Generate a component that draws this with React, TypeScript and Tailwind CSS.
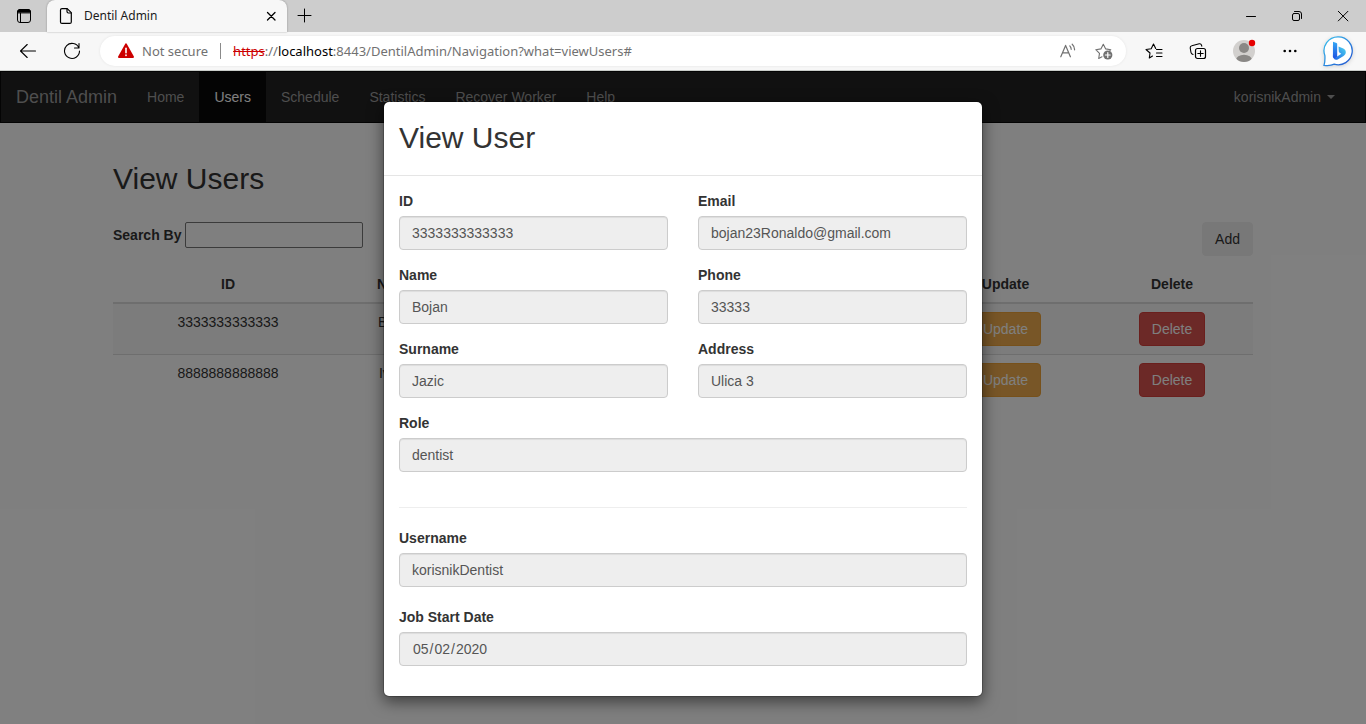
import React from "react";

type IconProps = { children: React.ReactNode; className?: string; box?: string };

function Icon({ children, className = "size-4", box = "0 0 16 16" }: IconProps) {
  return (
    <svg
      viewBox={box}
      className={className}
      fill="none"
      stroke="currentColor"
      strokeLinecap="round"
      strokeLinejoin="round"
      aria-hidden="true"
    >
      {children}
    </svg>
  );
}

function TabStrip() {
  return (
    <div className="flex h-8 bg-[#cdcdcd]">
      <button aria-label="Tab actions" className="flex w-[47px] items-center justify-center">
        <Icon>
          <rect x="1.5" y="1.5" width="13" height="13" rx="2.5" />
          <path d="M1.5 4.5V4A2.5 2.5 0 0 1 4 1.5h8A2.5 2.5 0 0 1 14.5 4v.5z" fill="currentColor" />
          <path d="M4.5 5v9.5" />
        </Icon>
      </button>
      <div className="flex w-60 items-center rounded-t-lg bg-[#f7f7f7] pr-2 pl-2.5 shadow-[0_0_2px_rgba(0,0,0,0.35)]">
        <Icon className="h-4 w-[18px]" box="0 0 18 16">
          <path
            d="M5 .6h5.2l4.1 4.1v9.2a1.500 1.500 0 0 1-1.500 1.500H5a1.500 1.500 0 0 1-1.500-1.500V2.100A1.500 1.500 0 0 1 5 .6z"
            strokeWidth="1.2"
          />
          <path d="M10 .8v2.700a1.500 1.500 0 0 0 1.500 1.500h2.600" strokeWidth="1.2" />
        </Icon>
        <span className="ml-[9px] flex-1 text-xs leading-4 text-[#1b1b1b]">Dentil Admin</span>
        <button aria-label="Close tab" className="flex size-4 items-center justify-center text-black">
          <Icon>
            <path d="M4.500 4.500l7.500 7.500M12 4.500L4.500 12" strokeWidth="1.3" />
          </Icon>
        </button>
      </div>
      <button aria-label="New tab" className="flex w-9 items-center justify-center">
        <Icon>
          <path d="M7.500 1v13M1 7.500h13" />
        </Icon>
      </button>
      <div className="ml-auto flex">
        <button aria-label="Minimize" className="flex w-[46px] items-center justify-center">
          <Icon>
            <path d="M3.500 8.500h9" />
          </Icon>
        </button>
        <button aria-label="Restore" className="flex w-[46px] items-center justify-center">
          <Icon>
            <rect x="3.500" y="5.500" width="7" height="7" rx="1.500" />
            <path d="M5.500 3.500H10A2.500 2.500 0 0 1 12.500 6v4.500" />
          </Icon>
        </button>
        <button aria-label="Close" className="flex w-[46px] items-center justify-center">
          <Icon>
            <path d="M3.300 3.300l9.600 9.600M12.900 3.300l-9.600 9.600" />
          </Icon>
        </button>
      </div>
    </div>
  );
}

function AddressBar() {
  return (
    <div className="mx-1.5 flex h-[30px] min-w-0 flex-1 items-center rounded-full bg-white pr-1 pl-4 text-[13px] leading-5 text-[#717171] shadow-[0_0_3px_rgba(0,0,0,0.08)]">
      <Icon className="size-5 shrink-0" box="0 0 20 20">
        <path d="M10 3.400L17 16H3z" fill="#cc0000" stroke="#cc0000" strokeWidth="2" />
        <path d="M10 7.200v4.600" stroke="#fff" strokeWidth="1.600" />
        <path d="M10 14.200v.100" stroke="#fff" strokeWidth="1.700" />
      </Icon>
      <span className="ml-1.5 whitespace-nowrap">Not secure</span>
      <span className="mx-3 h-4 w-px shrink-0 bg-[#8a8a8a]" />
      <div role="textbox" aria-label="Address" className="min-w-0 flex-1 truncate">
        <span className="text-[#cc0000] line-through">https</span>://
        <span className="text-black">localhost</span>
        :8443/DentilAdmin/Navigation?what=viewUsers#
      </div>
      <button aria-label="Read aloud" className="flex w-9 items-center justify-center">
        <Icon>
          <path d="M.8 13.800L5.600 2.400l4.800 11.400M2.600 9.800h6M9.800 2.800c1 1 1.400 2.100 1.400 3.500M12.200 1.200c1.700 1.500 2.500 3.300 2.400 5.600" strokeWidth="1.2" />
        </Icon>
      </button>
      <button aria-label="Add to favorites" className="flex w-9 items-center justify-center">
        <Icon className="size-[18px]" box="0 0 18 18">
          <path
            d="M7 14.800L3.700 16.500l.8-5.100L.8 7.700l5.100-.8L8.300 2.200l2.400 4.700 5.100.8-1 1"
            strokeWidth="1.1"
          />
          <circle cx="12.800" cy="13" r="4.600" fill="currentColor" stroke="none" />
          <path d="M12.800 10.600v4.800M10.400 13h4.800" stroke="#fff" strokeWidth="1.2" />
        </Icon>
      </button>
    </div>
  );
}

function Toolbar() {
  return (
    <div className="flex h-[39px] items-center border-b border-[#c9cdc9] bg-[#f7f7f7] pr-0.5 pl-1.5">
      <button aria-label="Back" className="flex w-11 items-center justify-center">
        <Icon className="size-[18px]" box="0 0 18 18">
          <path d="M8.200 2.500L1.500 9l6.700 6.500M1.500 9h15" strokeWidth="1.1" />
        </Icon>
      </button>
      <button aria-label="Refresh" className="flex w-11 items-center justify-center">
        <Icon className="size-[18px]" box="0 0 18 18">
          <path d="M15.900 6A7.500 7.500 0 1 0 16.500 9M16 1.500V6h-4.500" strokeWidth="1.1" />
        </Icon>
      </button>
      <AddressBar />
      <button aria-label="Favorites" className="flex w-11 items-center justify-center">
        <Icon className="size-[18px]" box="0 0 18 18">
          <path
            d="M7.500 14L4.300 16l.7-5L1 7.500l5.200-.8L8.500 2l2.200 4.500M11.500 7.500h5.500M11.500 11h5.500M11.500 14.500h5.500"
            strokeWidth="1.1"
          />
        </Icon>
      </button>
      <button aria-label="Collections" className="flex w-11 items-center justify-center">
        <Icon className="size-[18px]" box="0 0 18 18">
          <rect x="6.500" y="6.500" width="10" height="10" rx="2" strokeWidth="1.2" />
          <path
            d="M11.500 8.800v5.400M8.800 11.500h5.400M4 12.500L3 11.900a2 2 0 0 1-1-1.400L1.200 6a2 2 0 0 1 1.600-2.200l7.400-2a2 2 0 0 1 2.300 1.400l.3 1"
            strokeWidth="1.1"
          />
        </Icon>
      </button>
      <button aria-label="Profile" className="flex w-12 items-center justify-center">
        <svg viewBox="0 0 24 24" className="size-6" aria-hidden="true">
          <clipPath id="avatar-clip">
            <circle cx="12" cy="12" r="11" />
          </clipPath>
          <circle cx="12" cy="12" r="11" fill="#d2d0ce" />
          <g clipPath="url(#avatar-clip)" fill="#8a8886">
            <circle cx="12" cy="9" r="5" />
            <ellipse cx="12" cy="21" rx="8" ry="5.200" />
          </g>
          <circle cx="20" cy="4" r="3.200" fill="#e60000" />
        </svg>
      </button>
      <button aria-label="Settings and more" className="flex w-11 items-center justify-center">
        <svg viewBox="0 0 16 16" className="size-4" aria-hidden="true">
          <circle cx="2.700" cy="8" r="1.300" />
          <circle cx="8" cy="8" r="1.300" />
          <circle cx="13.300" cy="8" r="1.300" />
        </svg>
      </button>
      <button aria-label="Discover" className="flex w-[52px] items-center justify-center">
        <svg viewBox="0 0 32 32" className="size-8 drop-shadow-sm" aria-hidden="true">
          <defs>
            <linearGradient id="ring" x1="0" y1="0" x2="1" y2="1">
              <stop offset="0" stopColor="#35c2ee" />
              <stop offset="1" stopColor="#2350cf" />
            </linearGradient>
            <linearGradient id="stem" x1="0" y1="0" x2="0" y2="1">
              <stop offset="0" stopColor="#35a8f5" />
              <stop offset="1" stopColor="#1d4fe0" />
            </linearGradient>
            <linearGradient id="bowl" x1="1" y1="0" x2="0" y2="1">
              <stop offset="0" stopColor="#4fd6ee" />
              <stop offset="1" stopColor="#1c62e8" />
            </linearGradient>
          </defs>
          <path
            d="M16.500 1.800a14 14 0 1 1-4.300 27.400c-2.600 1.300-6 1.700-10.200 1.200.9-2.600 1.100-5.300.9-9.700A14 14 0 0 1 16.500 1.800z"
            fill="#fff"
            stroke="url(#ring)"
            strokeWidth="1.3"
          />
          <path d="M11 6.800l3.500 1.300c.5.2.7.5.7 1v12.400l-2.400 2.600c-1.200-.5-1.900-1.400-1.900-2.800z" fill="url(#stem)" />
          <path
            d="M16.500 11.500l4.800 2.100c1.700.8 2.500 2 2.500 3.700 0 1.500-.7 2.700-2.200 3.600l-5.900 3.500c-1.500.8-2.900.4-3.800-.7l7.400-5-1.600-.9c-.5-.3-.7-.7-.9-1.200z"
            fill="url(#bowl)"
          />
        </svg>
      </button>
    </div>
  );
}

const navItems = ["Home", "Users", "Schedule", "Statistics", "Recover Worker", "Help"];

function Navbar() {
  return (
    <nav className="flex h-[52px] items-stretch border border-[#080808] bg-[#222] pr-[15px] leading-5 text-[#9d9d9d]">
      <a href="#" className="flex items-center px-[15px] text-lg leading-5">
        Dentil Admin
      </a>
      {navItems.map((item) => (
        <a
          key={item}
          href="#"
          className={
            item === "Users" ? "flex items-center bg-[#080808] px-[15px] text-white" : "flex items-center px-[15px]"
          }
        >
          {item}
        </a>
      ))}
      <a href="#" className="ml-auto flex items-center px-[15px]">
        korisnikAdmin
        <span className="ml-1.5 border-x-4 border-t-4 border-x-transparent border-t-current" />
      </a>
    </nav>
  );
}

const users = [
  { id: "3333333333333", name: "Bojan", surname: "Jazic", role: "dentist" },
  { id: "8888888888888", name: "Ivana", surname: "Jazic", role: "admin" },
];

const button = "h-[34px] rounded border px-3 leading-5";

function UsersPage() {
  return (
    <section className="mx-auto w-full max-w-[1140px] pt-[39px]">
      <h2 className="text-3xl leading-[33px]">View Users</h2>
      <div className="mt-[27px] flex items-start justify-between">
        <div className="flex items-center gap-1">
          <label htmlFor="search" className="font-bold">
            Search By
          </label>
          <input id="search" className="h-[26px] w-[178px] rounded-xs border border-[#767676] bg-white px-1" />
        </div>
        <button className={`${button} border-[#f0f0f0] bg-[#f0f0f0]`}>Add</button>
      </div>
      <table className="mt-2.5 w-full table-fixed border-separate border-spacing-0 text-center">
        <colgroup>
          <col className="w-[230px]" />
          <col className="w-[106px]" />
          <col />
          <col />
          <col />
          <col className="w-[171px]" />
          <col className="w-[162px]" />
        </colgroup>
        <thead>
          <tr>
            {["ID", "Name", "Surname", "Role", "View", "Update", "Delete"].map((title) => (
              <th key={title} className="border-b-2 border-[#ddd] p-2 leading-5">
                {title}
              </th>
            ))}
          </tr>
        </thead>
        <tbody className="align-top [&>tr:first-child>td]:bg-[#f9f9f9] [&>tr+tr>td]:border-t [&>tr+tr>td]:border-[#ddd]">
          {users.map((user) => (
            <tr key={user.id}>
              <td className="p-2">{user.id}</td>
              <td className="p-2">{user.name}</td>
              <td className="p-2">{user.surname}</td>
              <td className="p-2">{user.role}</td>
              <td className="p-2">
                <button className={`${button} mx-auto block border-[#2e6da4] bg-[#337ab7] text-white`}>View</button>
              </td>
              <td className="p-2">
                <button className={`${button} mx-auto block border-[#eea236] bg-[#f0ad4e] text-white`}>Update</button>
              </td>
              <td className="p-2">
                <button className={`${button} mx-auto block border-[#d43f3a] bg-[#d9534f] text-white`}>Delete</button>
              </td>
            </tr>
          ))}
        </tbody>
      </table>
    </section>
  );
}

type FieldProps = { id: string; label: string; value: string; type?: string };

function Field({ id, label, value, type = "text" }: FieldProps) {
  return (
    <div className="flex flex-col gap-[5px]">
      <label htmlFor={id} className="font-bold">
        {label}
      </label>
      <input
        id={id}
        type={type}
        defaultValue={value}
        readOnly
        className="h-[34px] w-full rounded border border-[#ccc] bg-[#eee] px-3 py-1.5 text-[#555] shadow-[inset_0_1px_1px_rgba(0,0,0,0.075)]"
      />
    </div>
  );
}

function ViewUserDialog() {
  return (
    <div className="absolute inset-0 flex items-start justify-center bg-black/50 pt-[30px]">
      <div
        role="dialog"
        aria-labelledby="dialog-title"
        className="w-full max-w-[600px] rounded-md border border-black/20 bg-white bg-clip-padding shadow-[0_5px_15px_rgba(0,0,0,0.5)]"
      >
        <header className="border-b border-[#e5e5e5] px-[15px] pt-[19px] pb-[21px]">
          <h2 id="dialog-title" className="text-3xl leading-[33px]">
            View User
          </h2>
        </header>
        <div className="px-[15px] pt-[15px] pb-[30px]">
          <div className="grid grid-cols-2 gap-x-[30px] gap-y-[15px]">
            <Field id="user-id" label="ID" value="3333333333333" />
            <Field id="email" label="Email" value="bojan23Ronaldo@gmail.com" />
            <Field id="name" label="Name" value="Bojan" />
            <Field id="phone" label="Phone" value="33333" />
            <Field id="surname" label="Surname" value="Jazic" />
            <Field id="address" label="Address" value="Ulica 3" />
            <div className="col-span-2">
              <Field id="role" label="Role" value="dentist" />
            </div>
          </div>
          <hr className="mt-[35px] mb-5 border-[#eee]" />
          <div className="flex flex-col gap-5">
            <Field id="username" label="Username" value="korisnikDentist" />
            <Field id="start-date" label="Job Start Date" value="2020-05-02" type="date" />
          </div>
        </div>
      </div>
    </div>
  );
}

export default function App() {
  return (
    <div className="flex min-h-screen flex-col">
      <header className="font-['Noto_Sans','Open_Sans',sans-serif] text-black">
        <TabStrip />
        <Toolbar />
      </header>
      <main className="relative flex-1 bg-white pb-8 font-['Liberation_Sans',Arial,sans-serif] text-sm leading-5 text-[#333]">
        <Navbar />
        <UsersPage />
        <ViewUserDialog />
      </main>
    </div>
  );
}
